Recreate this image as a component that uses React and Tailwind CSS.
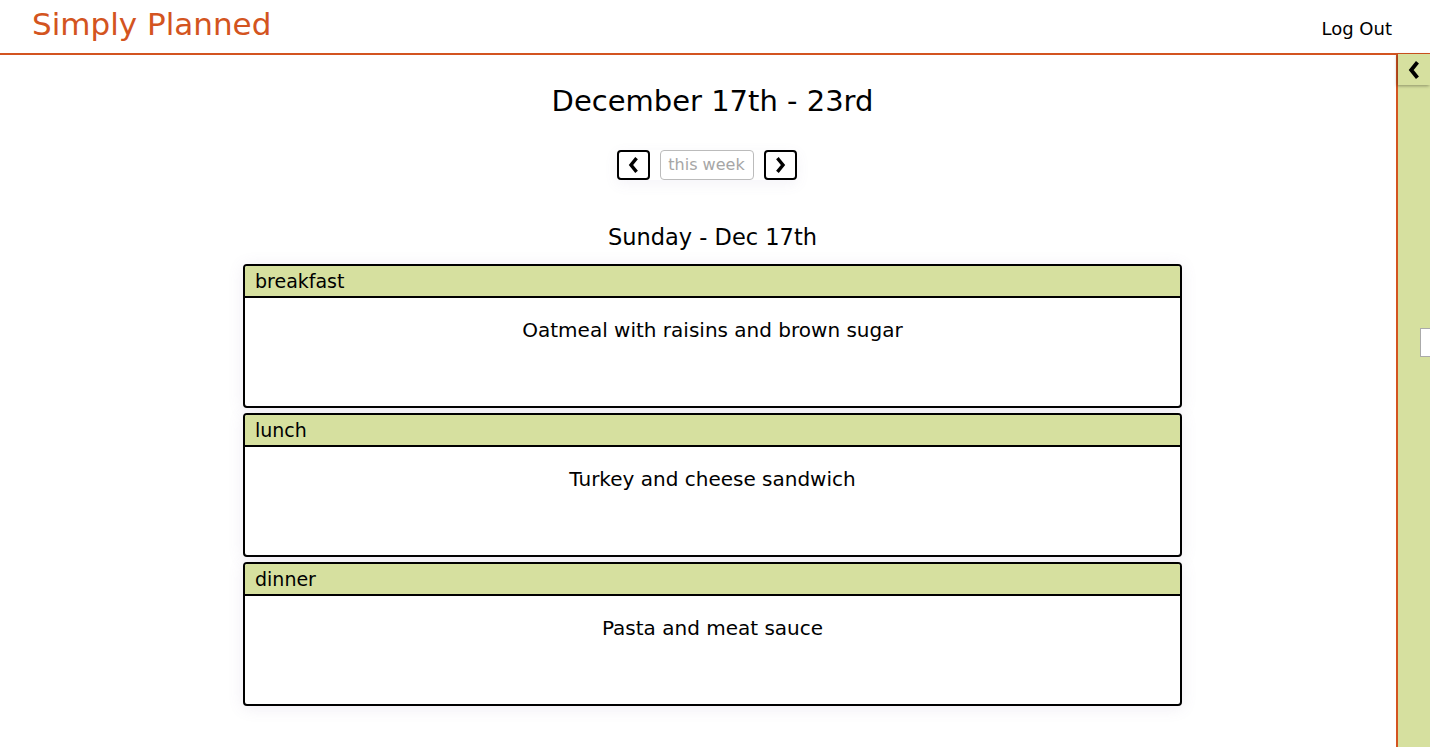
import React from 'react';

const font = { fontFamily: '"DejaVu Sans", "Open Sans", sans-serif' };

function Chevron({ dir = 'left', className = '' }) {
  return (
    <svg className={className} viewBox="0 0 10 16" fill="none" stroke="currentColor" strokeWidth="3.4" strokeLinecap="square">
      {dir === 'left' ? <path d="M7 2.5L2.5 8 7 13.5" /> : <path d="M3 2.5L7.5 8 3 13.5" />}
    </svg>
  );
}

function MealCard({ label, meal }) {
  return (
    <div className="border-2 border-black rounded-[4px] overflow-hidden bg-white shadow-[0_2px_16px_rgba(120,100,160,0.12)]">
      <div className="bg-[#d6e09f] border-b-2 border-black h-[32px] px-[10px] flex items-center text-[19px] text-black">
        {label}
      </div>
      <div className="h-[108px] pt-[17px] text-center text-[20px] text-black">{meal}</div>
    </div>
  );
}

export default function App() {
  return (
    <div className="min-h-screen bg-white text-black" style={font}>
      {/* Header */}
      <div className="h-[55px] border-b-2 border-[#d35420] flex items-center justify-between pl-[32px] pr-[38px]">
        <div className="text-[31px] text-[#d35420] -mt-[4px]">Simply Planned</div>
        <div className="text-[18px] mt-[3px]">Log Out</div>
      </div>

      {/* Main */}
      <div className="flex flex-col items-center pr-[5px]">
        <h1 className="text-[29px] mt-[28px] leading-[36px]">December 17th - 23rd</h1>
        <div className="flex items-center gap-[10px] mt-[31px] mr-[12px] shadow-[0_4px_14px_rgba(120,100,160,0.08)]">
          <button className="w-[33px] h-[30px] border-2 border-black rounded-[4px] flex items-center justify-center">
            <Chevron dir="left" className="w-[11px] h-[16px]" />
          </button>
          <button className="w-[94px] h-[30px] border border-[#bbb] rounded-[4px] text-[16px] text-[#a6a6a6]">
            this week
          </button>
          <button className="w-[33px] h-[30px] border-2 border-black rounded-[4px] flex items-center justify-center">
            <Chevron dir="right" className="w-[11px] h-[16px]" />
          </button>
        </div>
        <h2 className="text-[22.5px] mt-[43px] leading-[28px]">Sunday - Dec 17th</h2>
        <div className="w-[939px] mt-[13px] flex flex-col gap-[5px] mb-[40px]">
          <MealCard label="breakfast" meal="Oatmeal with raisins and brown sugar" />
          <MealCard label="lunch" meal="Turkey and cheese sandwich" />
          <MealCard label="dinner" meal="Pasta and meat sauce" />
        </div>
      </div>

      {/* Side drawer */}
      <div className="fixed top-[54px] right-0 bottom-0 w-[34px] bg-[#d6e09f] border-l-2 border-[#d35420]">
        <button className="w-[32px] h-[31px] bg-[#d6e09f] flex items-center justify-center shadow-[-1px_1px_3px_rgba(0,0,0,0.35)]">
          <Chevron dir="left" className="w-[12px] h-[18px]" />
        </button>
        <div className="mt-[243px] ml-[22px] w-[12px] h-[29px] bg-white border border-[#aaa]"></div>
      </div>
    </div>
  );
}
